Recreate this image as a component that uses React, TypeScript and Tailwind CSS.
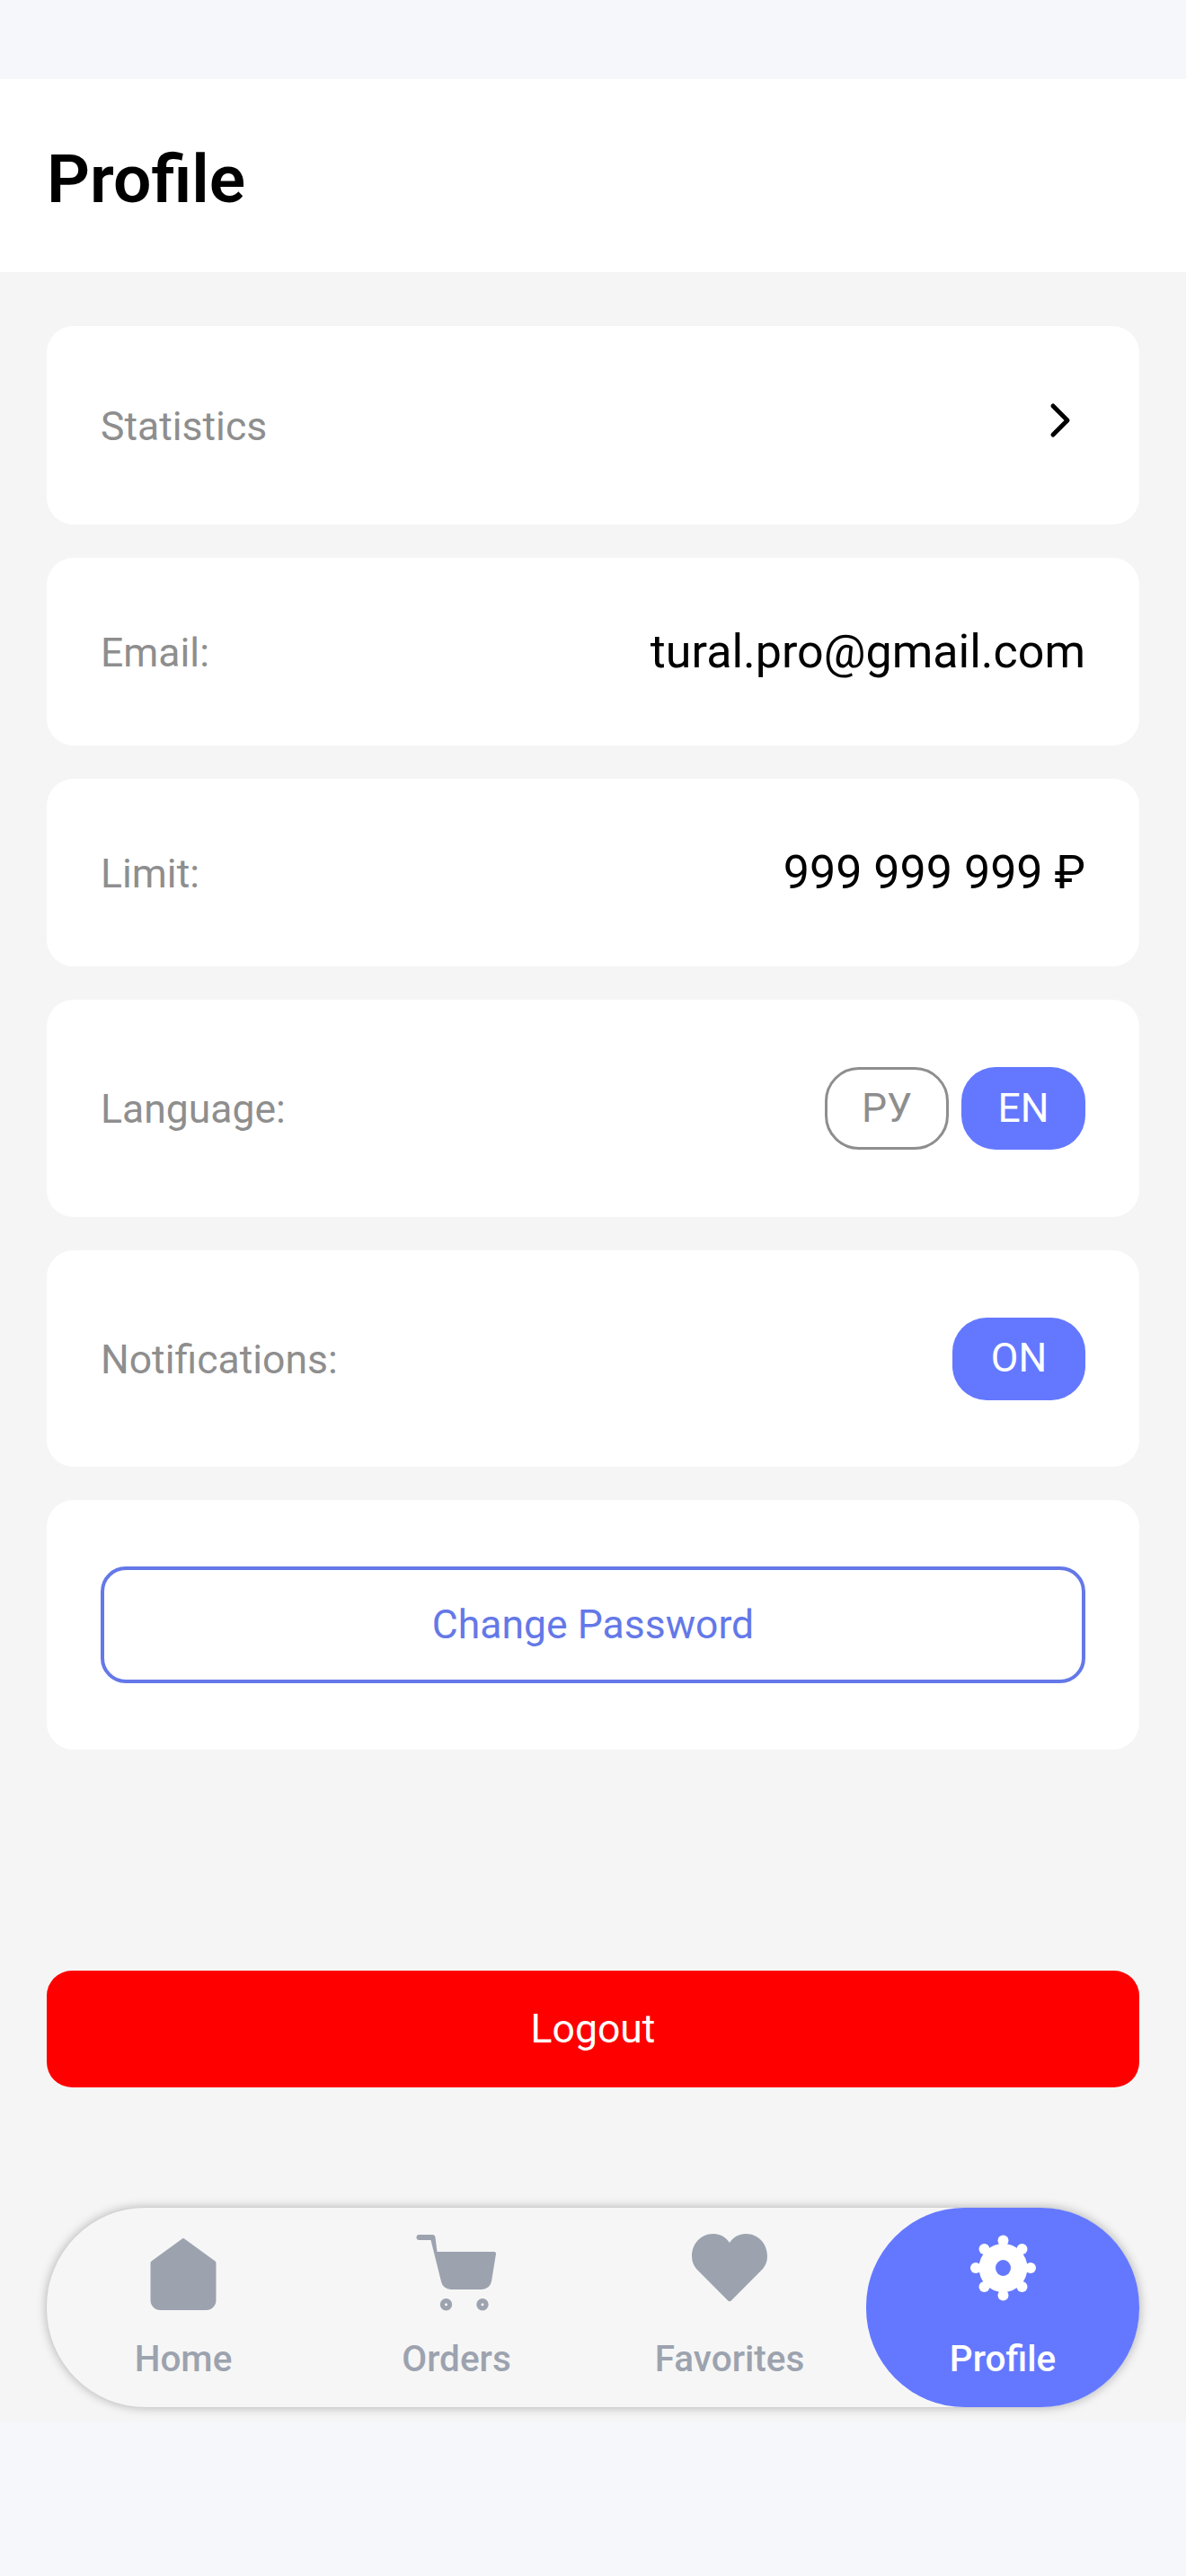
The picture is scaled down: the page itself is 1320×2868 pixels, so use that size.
const BLUE = 'bg-[#6478ff]';

function Card({ label, children, height }: { label: string; children: React.ReactNode; height: string }) {
  return (
    <div className={`flex items-center justify-between rounded-[30px] bg-white px-[60px] ${height}`}>
      <span className="pt-[3px] text-[44.5px] leading-none text-[#8e8e8e]">{label}</span>
      {children}
    </div>
  );
}

function Pill({ text, active, width }: { text: string; active?: boolean; width: string }) {
  return (
    <div
      className={
        active
          ? `flex h-[92px] items-center justify-center rounded-[38px] text-[44.5px] text-white ${BLUE} ${width}`
          : `flex h-[92px] items-center justify-center rounded-[38px] border-[3px] border-[#8e8e8e] text-[44.5px] text-[#8e8e8e] ${width}`
      }
    >
      {text}
    </div>
  );
}

function HomeIcon() {
  return (
    <svg width="96" height="92" viewBox="0 0 96 92" fill="#9ca3af">
      <path d="M46.5 8.8a2.2 2.2 0 0 1 3 0L83.5 33.5a3 3 0 0 1 1 2.2V77a11 11 0 0 1-11 11h-51a11 11 0 0 1-11-11V35.7a3 3 0 0 1 1-2.2Z" />
    </svg>
  );
}

function CartIcon() {
  return (
    <svg width="96" height="92" viewBox="0 0 96 92" fill="#9ca3af">
      <path d="M6.5 4H21a3.500 3.500 0 0 1 3.500 3L26.500 23H90a2.200 2.200 0 0 1 2 2.500L87 56a11 11 0 0 1-11 9H42a11 11 0 0 1-11-9L19.500 10H6.500a3 3 0 0 1 0-6Z" />
      <path fillRule="evenodd" d="M36.5 75a6.700 6.700 0 1 0 0 13.400a6.700 6.700 0 1 0 0-13.400Zm0 5.200a1.500 1.500 0 1 1 0 3a1.500 1.500 0 1 1 0-3Z" />
      <path fillRule="evenodd" d="M77 75a6.700 6.700 0 1 0 0 13.400a6.700 6.700 0 1 0 0-13.400Zm0 5.200a1.500 1.500 0 1 1 0 3a1.500 1.500 0 1 1 0-3Z" />
    </svg>
  );
}

function HeartIcon() {
  return (
    <svg width="96" height="92" viewBox="0 0 96 92" fill="#9ca3af">
      <path d="M48 13C44 6.500 37 3 30 3C16 3 6 14 6 28C6 34 8 38 11 42L45.800 77a3 3 0 0 0 4.400 0L85 42C88 38 90 34 90 28C90 14 80 3 66 3C59 3 52 6.500 48 13Z" />
    </svg>
  );
}

function GearIcon() {
  return (
    <svg width="96" height="92" viewBox="0 0 96 92" fill="#ffffff">
      <circle cx="48.500" cy="41" r="27" />
      <circle cx="48.500" cy="10.500" r="6" />
      <circle cx="48.500" cy="71.500" r="6" />
      <circle cx="18" cy="41" r="6" />
      <circle cx="79" cy="41" r="6" />
      <circle cx="27.500" cy="20" r="6" />
      <circle cx="69.500" cy="20" r="6" />
      <circle cx="27.500" cy="62" r="6" />
      <circle cx="69.500" cy="62" r="6" />
      <ellipse cx="48.500" cy="41" rx="8.500" ry="9" fill="#6478ff" />
    </svg>
  );
}

const tabs = [
  { label: 'Home', icon: <HomeIcon /> },
  { label: 'Orders', icon: <CartIcon /> },
  { label: 'Favorites', icon: <HeartIcon /> },
  { label: 'Profile', icon: <GearIcon />, active: true },
];

export default function App() {
  return (
    <main className="flex h-[2868px] flex-col bg-[#f5f7fb] font-['Roboto',sans-serif]">
      <div className="h-[88px]" />

      <header className="flex h-[215px] items-center bg-white px-[52px] pt-[8px]">
        <h1 className="text-[75px] font-semibold leading-none text-black">Profile</h1>
      </header>

      <div className="flex h-[2393px] flex-col bg-[#f5f5f5] px-[52px] pt-[60px]">
        <div className="flex flex-col gap-[37px]">
          <Card label="Statistics" height="h-[221px]">
            <svg width="48" height="48" viewBox="0 0 48 48" fill="none" className="mb-3">
              <path d="M12 8L28 24L12 40" stroke="#000" strokeWidth="5" strokeLinecap="round" strokeLinejoin="round" />
            </svg>
          </Card>

          <Card label="Email:" height="h-[209px]">
            <span className="text-[52px] leading-none text-black">tural.pro@gmail.com</span>
          </Card>

          <Card label="Limit:" height="h-[209px]">
            <span className="text-[52px] leading-none text-black">999 999 999 ₽</span>
          </Card>

          <Card label="Language:" height="h-[242px]">
            <div className="flex gap-[14px]">
              <Pill text="РУ" width="w-[138px]" />
              <Pill text="EN" active width="w-[138px]" />
            </div>
          </Card>

          <Card label="Notifications:" height="h-[241px]">
            <Pill text="ON" active width="w-[148px]" />
          </Card>

          <div className="rounded-[30px] bg-white px-[60px] py-[74px]">
            <div className="flex h-[130px] items-center justify-center rounded-[28px] border-4 border-[#6478e8] text-[44.5px] text-[#6478e8]">
              Change Password
            </div>
          </div>
        </div>

        <button className="mt-[246px] flex h-[130px] items-center justify-center rounded-[28px] bg-[#ff0000] text-[44.5px] text-white">
          Logout
        </button>

        <nav className="mt-[134px] grid h-[222px] grid-cols-4 rounded-[110px] bg-[#f6f6f6] shadow-[0_0_12px_rgba(0,0,0,0.3)]">
          {tabs.map((tab) => (
            <div
              key={tab.label}
              className={
                tab.active
                  ? `flex flex-col items-center rounded-[110px] pt-[26px] ${BLUE}`
                  : 'flex flex-col items-center rounded-[110px] pt-[26px]'
              }
            >
              {tab.icon}
              <span
                className={
                  tab.active
                    ? 'mt-[20px] text-[40.5px] font-medium leading-[60px] text-white'
                    : 'mt-[20px] text-[40.5px] font-medium leading-[60px] text-[#9ca3af]'
                }
              >
                {tab.label}
              </span>
            </div>
          ))}
        </nav>
      </div>
    </main>
  );
}
